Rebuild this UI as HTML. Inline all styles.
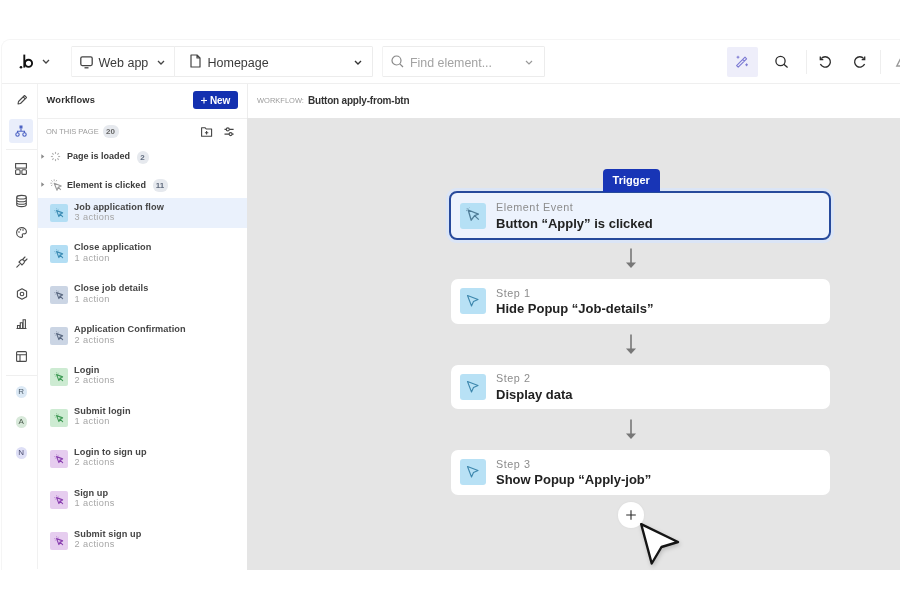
<!DOCTYPE html>
<html><head><meta charset="utf-8">
<style>
*{box-sizing:border-box;margin:0;padding:0}
html,body{width:900px;height:600px;overflow:hidden;background:#fff;}body{filter:blur(0.3px);font-family:"Liberation Sans",sans-serif;color:#2b2b2b}
.a{position:absolute}
.t{position:absolute;line-height:1;white-space:nowrap}
svg{position:absolute;overflow:visible}
</style></head><body>
<!-- app window -->
<div class="a" style="left:1px;top:39px;width:910px;height:531px;background:#fff;border:1px solid #f5f5f5;border-right:none;border-bottom:none;border-radius:9px 0 0 0"></div>
<!-- top bar border -->
<div class="a" style="left:2px;top:83px;width:898px;height:1px;background:#efefef"></div>

<!-- logo -->
<svg style="left:18px;top:53px" width="18" height="17" viewBox="0 0 18 17"><circle cx="3" cy="14.3" r="1.3" fill="#111"/><path d="M6.3 1.6 V14.6" stroke="#111" stroke-width="1.9"/><circle cx="10.5" cy="10.3" r="3.6" fill="none" stroke="#111" stroke-width="1.9"/></svg>
<svg style="left:42px;top:59px" width="8" height="5" viewBox="0 0 8 5"><path d="M1 1 L4 4 L7 1" fill="none" stroke="#444" stroke-width="1.3"/></svg>

<!-- Web app / Homepage group -->
<div class="a" style="left:71px;top:46px;width:302px;height:31px;border:1px solid #ececec;border-left-color:#f2f2f2;border-radius:1.5px"></div>
<div class="a" style="left:174px;top:46px;width:1px;height:31px;background:#eeeeee"></div>
<svg style="left:80px;top:55.5px" width="13" height="13" viewBox="0 0 13 13"><rect x="0.8" y="0.8" width="11.4" height="8.8" rx="1.5" fill="none" stroke="#444" stroke-width="1.3"/><path d="M4.5 11.8 H8.5" stroke="#444" stroke-width="1.3"/></svg>
<div class="t" style="left:98.5px;top:56.5px;font-size:12.5px;color:#3a3a3a">Web app</div>
<svg style="left:157px;top:60px" width="8" height="5" viewBox="0 0 8 5"><path d="M1 1 L4 4 L7 1" fill="none" stroke="#444" stroke-width="1.3"/></svg>
<svg style="left:190px;top:54px" width="11" height="14" viewBox="0 0 11 14"><path d="M1 1 H7 L10 4 V13 H1 Z M7 1 V4 H10" fill="none" stroke="#444" stroke-width="1.2" stroke-linejoin="round"/></svg>
<div class="t" style="left:207.5px;top:56.5px;font-size:12.5px;color:#3a3a3a">Homepage</div>
<svg style="left:354px;top:60px" width="8" height="5" viewBox="0 0 8 5"><path d="M1 1 L4 4 L7 1" fill="none" stroke="#333" stroke-width="1.4"/></svg>

<!-- Find element -->
<div class="a" style="left:382px;top:46px;width:163px;height:31px;border:1px solid #ececec;border-left-color:#f2f2f2;border-radius:1.5px"></div>
<svg style="left:391px;top:55px" width="13" height="13" viewBox="0 0 13 13"><circle cx="5.5" cy="5.5" r="4.5" fill="none" stroke="#888" stroke-width="1.2"/><path d="M8.8 8.8 L12 12" stroke="#888" stroke-width="1.2"/></svg>
<div class="t" style="left:410px;top:57px;font-size:12.4px;color:#a3a3a3">Find element...</div>
<svg style="left:525px;top:60px" width="8" height="5" viewBox="0 0 8 5"><path d="M1 1 L4 4 L7 1" fill="none" stroke="#999" stroke-width="1.2"/></svg>

<!-- right toolbar -->
<div class="a" style="left:727px;top:47px;width:31px;height:30px;background:#eeeefa;border-radius:2px"></div>
<svg style="left:735px;top:55px" width="14" height="14" viewBox="0 0 14 14"><path d="M1.6 10.6 L10 2.2 L11.6 3.8 L3.2 12.2 Z M7.8 4.4 L9.4 6" fill="none" stroke="#7b79d3" stroke-width="1.1" stroke-linejoin="round"/><path d="M3 0.8 V3.6 M1.6 2.2 H4.4 M11.6 8.4 V11.2 M10.2 9.8 H13" stroke="#7b79d3" stroke-width="1"/></svg>
<svg style="left:775px;top:55px" width="14" height="14" viewBox="0 0 14 14"><circle cx="5.5" cy="6" r="4.6" fill="none" stroke="#2b2b2b" stroke-width="1.3"/><path d="M8.8 9.3 L12.6 12.6" stroke="#2b2b2b" stroke-width="1.3"/></svg>
<div class="a" style="left:806px;top:50px;width:1px;height:24px;background:#eeeeee"></div>
<svg style="left:818px;top:55px" width="14" height="14" viewBox="0 0 14 14"><path d="M3.2 3.6 A5.2 5.2 0 1 1 2.4 9" fill="none" stroke="#2b2b2b" stroke-width="1.3"/><path d="M2.3 1.6 V4.6 H5.3" fill="none" stroke="#2b2b2b" stroke-width="1.3"/></svg>
<svg style="left:853px;top:55px" width="14" height="14" viewBox="0 0 14 14"><path d="M10.8 3.6 A5.2 5.2 0 1 0 11.6 9" fill="none" stroke="#2b2b2b" stroke-width="1.3"/><path d="M11.7 1.6 V4.6 H8.7" fill="none" stroke="#2b2b2b" stroke-width="1.3"/></svg>
<div class="a" style="left:880px;top:50px;width:1px;height:24px;background:#eeeeee"></div>
<svg style="left:896px;top:54px" width="14" height="14" viewBox="0 0 14 14"><path d="M6.5 1 L12.5 12 H0.8 Z" fill="none" stroke="#999" stroke-width="1.4"/></svg>

<!-- left rail -->
<div class="a" style="left:37px;top:84px;width:1px;height:485px;background:#f1f1f1"></div>
<div class="a" style="left:9px;top:119px;width:24px;height:24px;background:#e9eefb;border-radius:3px"></div>
<div class="a" style="left:6px;top:149px;width:31px;height:1px;background:#efefef"></div>
<div class="a" style="left:6px;top:375px;width:31px;height:1px;background:#efefef"></div>
<svg style="left:15.5px;top:94px" width="12" height="12" viewBox="0 0 12 12"><path d="M2 10 L2.5 7.5 L8.5 1.5 L10.5 3.5 L4.5 9.5 Z M7.2 2.8 L9.2 4.8" fill="none" stroke="#4a4a4a" stroke-width="1.1" stroke-linejoin="round"/></svg>
<svg style="left:15px;top:125px" width="12" height="12" viewBox="0 0 12 12"><rect x="4.5" y="0.5" width="3" height="3" fill="#4d63c4"/><path d="M6 3.5 V6 M2.5 8 V6.2 H9.5 V8" fill="none" stroke="#4d63c4" stroke-width="1.1"/><circle cx="2.5" cy="9.5" r="1.7" fill="none" stroke="#4d63c4" stroke-width="1.1"/><circle cx="9.5" cy="9.5" r="1.7" fill="none" stroke="#4d63c4" stroke-width="1.1"/></svg>
<svg style="left:15px;top:163px" width="12" height="12" viewBox="0 0 12 12"><rect x="0.6" y="0.6" width="10.8" height="4.5" fill="none" stroke="#4a4a4a" stroke-width="1.1"/><rect x="0.6" y="6.8" width="4.5" height="4.6" rx="1" fill="none" stroke="#4a4a4a" stroke-width="1.1"/><rect x="6.9" y="6.8" width="4.5" height="4.6" rx="1" fill="none" stroke="#4a4a4a" stroke-width="1.1"/></svg>
<svg style="left:15.5px;top:195px" width="11" height="12" viewBox="0 0 11 12"><ellipse cx="5.5" cy="2.2" rx="4.8" ry="1.8" fill="none" stroke="#4a4a4a" stroke-width="1.1"/><path d="M0.7 2.2 V9.8 A4.8 1.8 0 0 0 10.3 9.8 V2.2 M0.7 5 A4.8 1.8 0 0 0 10.3 5 M0.7 7.5 A4.8 1.8 0 0 0 10.3 7.5" fill="none" stroke="#4a4a4a" stroke-width="1.1"/></svg>
<svg style="left:15.5px;top:226.5px" width="11" height="11" viewBox="0 0 11 11"><path d="M5.5 0.6 C8.5 0.6 10.4 2.6 10.4 4.8 C10.4 6.5 9 7 7.8 6.8 C6.6 6.6 6 7.5 6.4 8.5 C6.9 9.8 6.2 10.4 5.2 10.4 C2.6 10.4 0.6 8.2 0.6 5.5 C0.6 2.8 2.8 0.6 5.5 0.6 Z" fill="none" stroke="#4a4a4a" stroke-width="1.1"/><circle cx="3" cy="5" r="0.8" fill="#4a4a4a"/><circle cx="4.5" cy="2.8" r="0.8" fill="#4a4a4a"/><circle cx="7" cy="3" r="0.8" fill="#4a4a4a"/></svg>
<svg style="left:15.5px;top:256px" width="12" height="12" viewBox="0 0 12 12"><path d="M0.8 11.2 L3.3 8.7 M3 6 L6 9 L7.8 7.2 C8.6 6.4 8.6 5.2 7.8 4.4 L7.6 4.2 C6.8 3.4 5.6 3.4 4.8 4.2 Z M7 3 L9 1 M9 5 L11 3" fill="none" stroke="#4a4a4a" stroke-width="1.1" stroke-linecap="round"/></svg>
<svg style="left:15.5px;top:287.5px" width="12" height="12" viewBox="0 0 12 12"><path d="M6 0.7 L10.6 3.35 V8.65 L6 11.3 L1.4 8.65 V3.35 Z" fill="none" stroke="#4a4a4a" stroke-width="1.1" stroke-linejoin="round"/><circle cx="6" cy="6" r="1.8" fill="none" stroke="#4a4a4a" stroke-width="1.1"/></svg>
<svg style="left:16px;top:319px" width="11" height="10" viewBox="0 0 11 10"><path d="M0.5 9.5 H10.5 M1.5 9.5 V6.5 H3.8 V9.5 M4.3 9.5 V3.8 H6.6 V9.5 M7.1 9.5 V0.8 H9.4 V9.5" fill="none" stroke="#4a4a4a" stroke-width="1.1"/></svg>
<svg style="left:15.5px;top:350.5px" width="11" height="11" viewBox="0 0 11 11"><rect x="0.6" y="0.6" width="9.8" height="9.8" rx="1" fill="none" stroke="#4a4a4a" stroke-width="1.1"/><path d="M0.6 3.8 H10.4 M4 3.8 V10.4" fill="none" stroke="#4a4a4a" stroke-width="1.1"/></svg>
<div class="a" style="left:15.5px;top:386.2px;width:11.5px;height:11.5px;border-radius:50%;background:#dce9f5"></div>
<div class="t" style="left:15.5px;width:11.5px;text-align:center;top:388.1px;font-size:8px;color:#4a5a6a">R</div>
<div class="a" style="left:15.5px;top:416.2px;width:11.5px;height:11.5px;border-radius:50%;background:#d8e9da"></div>
<div class="t" style="left:15.5px;width:11.5px;text-align:center;top:418.1px;font-size:8px;color:#4a5a4c">A</div>
<div class="a" style="left:15.5px;top:447.2px;width:11.5px;height:11.5px;border-radius:50%;background:#dedff6"></div>
<div class="t" style="left:15.5px;width:11.5px;text-align:center;top:449.1px;font-size:8px;color:#4a4c70">N</div>

<!-- sidebar -->
<div class="a" style="left:247px;top:84px;width:1px;height:485px;background:#ededed"></div>
<div class="a" style="left:38px;top:118px;width:209px;height:1px;background:#efefef"></div>
<div class="t" style="left:46.5px;top:96.3px;font-size:9.3px;font-weight:bold;color:#2e2e2e;letter-spacing:0.2px">Workflows</div>
<div class="a" style="left:193px;top:91px;width:45px;height:18px;background:#1330b0;border-radius:3px"></div>
<svg style="left:200.5px;top:96.5px" width="6" height="7" viewBox="0 0 6 7"><path d="M3 0.5 V6.5 M0 3.5 H6" stroke="#fff" stroke-width="1.1"/></svg>
<div class="t" style="left:210px;top:95.6px;font-size:10px;font-weight:bold;color:#fff;letter-spacing:-0.1px">New</div>
<div class="t" style="left:46px;top:128px;font-size:7.5px;color:#9c9c9c">ON THIS PAGE</div>
<div class="a" style="left:103px;top:125px;width:16px;height:13px;background:#e6e9ee;border-radius:6px"></div>
<div class="t" style="left:106px;top:128px;font-size:8px;font-weight:bold;color:#666">20</div>

<svg style="left:201px;top:126.5px" width="12" height="10" viewBox="0 0 12 10"><path d="M0.6 0.8 H4.2 L5.2 2 H10.6 V9.2 H0.6 Z" fill="none" stroke="#444" stroke-width="1.1" stroke-linejoin="round"/><path d="M5.6 4 V7.4 M3.9 5.7 H7.3" stroke="#444" stroke-width="1.1"/></svg>
<svg style="left:223.5px;top:126.5px" width="11" height="10" viewBox="0 0 11 10"><path d="M0.5 2.4 H9.6 M0.5 7.1 H9.6" stroke="#444" stroke-width="1.1"/><circle cx="3.8" cy="2.4" r="1.5" fill="#fff" stroke="#444" stroke-width="1.1"/><circle cx="6.6" cy="7.1" r="1.5" fill="#fff" stroke="#444" stroke-width="1.1"/></svg>
<svg style="left:41px;top:154.1px" width="4" height="5" viewBox="0 0 4 5"><path d="M0.3 0.3 L3.3 2.5 L0.3 4.7 Z" fill="#8a8a8a"/></svg>
<svg style="left:41px;top:182.3px" width="4" height="5" viewBox="0 0 4 5"><path d="M0.3 0.3 L3.3 2.5 L0.3 4.7 Z" fill="#8a8a8a"/></svg>
<svg style="left:50px;top:151px" width="11" height="11" viewBox="0 0 11 11"><path d="M8.10 5.50 L10.10 5.50" stroke="#b0b0b0" stroke-width="1.1"/><path d="M7.34 7.34 L8.75 8.75" stroke="#b0b0b0" stroke-width="1.1"/><path d="M5.50 8.10 L5.50 10.10" stroke="#b0b0b0" stroke-width="1.1"/><path d="M3.66 7.34 L2.25 8.75" stroke="#b0b0b0" stroke-width="1.1"/><path d="M2.90 5.50 L0.90 5.50" stroke="#b0b0b0" stroke-width="1.1"/><path d="M3.66 3.66 L2.25 2.25" stroke="#b0b0b0" stroke-width="1.1"/><path d="M5.50 2.90 L5.50 0.90" stroke="#b0b0b0" stroke-width="1.1"/><path d="M7.34 3.66 L8.75 2.25" stroke="#b0b0b0" stroke-width="1.1"/></svg>
<svg style="left:49.5px;top:179px" width="12" height="12" viewBox="0 0 12 12"><path d="M4.2 4.2 L11.2 7 L8.2 8.2 L7 11.2 Z M8.2 8.2 L10.8 10.8" fill="none" stroke="#9a9a9a" stroke-width="1.1" stroke-linejoin="round"/><path d="M4.2 0.3 V2.2 M0.3 4.2 H2.2 M1.2 1.2 L2.6 2.6 M6.8 1 L6 2.4 M1 6.8 L2.4 6" stroke="#b0b0b0" stroke-width="0.9"/></svg>
<div class="t" style="left:67px;top:152.2px;font-size:9px;font-weight:bold;color:#3a3a3a;letter-spacing:0px">Page is loaded</div>
<div class="a" style="left:136.5px;top:150.5px;width:12px;height:13px;background:#e6e9ee;border-radius:6px"></div>
<div class="t" style="left:136.5px;width:12px;text-align:center;top:153.5px;font-size:8px;font-weight:bold;color:#5f6a7c">2</div>
<div class="t" style="left:67px;top:180.9px;font-size:9px;font-weight:bold;color:#3a3a3a;letter-spacing:0.05px">Element is clicked</div>
<div class="a" style="left:152.5px;top:179px;width:15px;height:13px;background:#e6e9ee;border-radius:6px"></div>
<div class="t" style="left:152.5px;width:15px;text-align:center;top:182px;font-size:8px;font-weight:bold;color:#5f6a7c">11</div>
<div class="a" style="left:38px;top:198px;width:209px;height:30px;background:#eaf1fc"></div>
<div class="a" style="left:50px;top:204.0px;width:18px;height:18px;background:#b3def4;border-radius:2px"></div>
<svg style="left:54px;top:208.0px" width="10" height="10" viewBox="0 0 10 10"><path d="M2.6 2.6 L8.6 4.9 L6.1 6.1 L4.9 8.6 Z M6.1 6.1 L8.6 8.6" fill="none" stroke="#3d8db5" stroke-width="1.15" stroke-linejoin="round" stroke-linecap="round"/><path d="M2.6 0.4 V1.3 M0.4 2.6 H1.3 M4.6 0.9 L4.1 1.6 M0.9 4.6 L1.6 4.1" stroke="#3d8db5" stroke-width="0.7" opacity="0.8"/></svg>
<div class="t" style="left:74px;top:202.5px;font-size:9.2px;font-weight:bold;color:#454545;letter-spacing:0.08px">Job application flow</div>
<div class="t" style="left:74.5px;top:212.6px;font-size:9.2px;color:#a6a6a6;letter-spacing:0.38px">3 actions</div>
<div class="a" style="left:50px;top:244.9px;width:18px;height:18px;background:#b3def4;border-radius:2px"></div>
<svg style="left:54px;top:248.95px" width="10" height="10" viewBox="0 0 10 10"><path d="M2.6 2.6 L8.6 4.9 L6.1 6.1 L4.9 8.6 Z M6.1 6.1 L8.6 8.6" fill="none" stroke="#3d8db5" stroke-width="1.15" stroke-linejoin="round" stroke-linecap="round"/><path d="M2.6 0.4 V1.3 M0.4 2.6 H1.3 M4.6 0.9 L4.1 1.6 M0.9 4.6 L1.6 4.1" stroke="#3d8db5" stroke-width="0.7" opacity="0.8"/></svg>
<div class="t" style="left:74px;top:243.4px;font-size:9.2px;font-weight:bold;color:#454545;letter-spacing:0.08px">Close application</div>
<div class="t" style="left:74.5px;top:253.5px;font-size:9.2px;color:#a6a6a6;letter-spacing:0.38px">1 action</div>
<div class="a" style="left:50px;top:285.9px;width:18px;height:18px;background:#cbd5e4;border-radius:2px"></div>
<svg style="left:54px;top:289.9px" width="10" height="10" viewBox="0 0 10 10"><path d="M2.6 2.6 L8.6 4.9 L6.1 6.1 L4.9 8.6 Z M6.1 6.1 L8.6 8.6" fill="none" stroke="#5b6a82" stroke-width="1.15" stroke-linejoin="round" stroke-linecap="round"/><path d="M2.6 0.4 V1.3 M0.4 2.6 H1.3 M4.6 0.9 L4.1 1.6 M0.9 4.6 L1.6 4.1" stroke="#5b6a82" stroke-width="0.7" opacity="0.8"/></svg>
<div class="t" style="left:74px;top:284.4px;font-size:9.2px;font-weight:bold;color:#454545;letter-spacing:0.08px">Close job details</div>
<div class="t" style="left:74.5px;top:294.5px;font-size:9.2px;color:#a6a6a6;letter-spacing:0.38px">1 action</div>
<div class="a" style="left:50px;top:326.9px;width:18px;height:18px;background:#cbd5e4;border-radius:2px"></div>
<svg style="left:54px;top:330.85px" width="10" height="10" viewBox="0 0 10 10"><path d="M2.6 2.6 L8.6 4.9 L6.1 6.1 L4.9 8.6 Z M6.1 6.1 L8.6 8.6" fill="none" stroke="#5b6a82" stroke-width="1.15" stroke-linejoin="round" stroke-linecap="round"/><path d="M2.6 0.4 V1.3 M0.4 2.6 H1.3 M4.6 0.9 L4.1 1.6 M0.9 4.6 L1.6 4.1" stroke="#5b6a82" stroke-width="0.7" opacity="0.8"/></svg>
<div class="t" style="left:74px;top:325.4px;font-size:9.2px;font-weight:bold;color:#454545;letter-spacing:0.08px">Application Confirmation</div>
<div class="t" style="left:74.5px;top:335.5px;font-size:9.2px;color:#a6a6a6;letter-spacing:0.38px">2 actions</div>
<div class="a" style="left:50px;top:367.8px;width:18px;height:18px;background:#cdebd2;border-radius:2px"></div>
<svg style="left:54px;top:371.8px" width="10" height="10" viewBox="0 0 10 10"><path d="M2.6 2.6 L8.6 4.9 L6.1 6.1 L4.9 8.6 Z M6.1 6.1 L8.6 8.6" fill="none" stroke="#3f9a55" stroke-width="1.15" stroke-linejoin="round" stroke-linecap="round"/><path d="M2.6 0.4 V1.3 M0.4 2.6 H1.3 M4.6 0.9 L4.1 1.6 M0.9 4.6 L1.6 4.1" stroke="#3f9a55" stroke-width="0.7" opacity="0.8"/></svg>
<div class="t" style="left:74px;top:366.3px;font-size:9.2px;font-weight:bold;color:#454545;letter-spacing:0.08px">Login</div>
<div class="t" style="left:74.5px;top:376.4px;font-size:9.2px;color:#a6a6a6;letter-spacing:0.38px">2 actions</div>
<div class="a" style="left:50px;top:408.8px;width:18px;height:18px;background:#cdebd2;border-radius:2px"></div>
<svg style="left:54px;top:412.75px" width="10" height="10" viewBox="0 0 10 10"><path d="M2.6 2.6 L8.6 4.9 L6.1 6.1 L4.9 8.6 Z M6.1 6.1 L8.6 8.6" fill="none" stroke="#3f9a55" stroke-width="1.15" stroke-linejoin="round" stroke-linecap="round"/><path d="M2.6 0.4 V1.3 M0.4 2.6 H1.3 M4.6 0.9 L4.1 1.6 M0.9 4.6 L1.6 4.1" stroke="#3f9a55" stroke-width="0.7" opacity="0.8"/></svg>
<div class="t" style="left:74px;top:407.2px;font-size:9.2px;font-weight:bold;color:#454545;letter-spacing:0.08px">Submit login</div>
<div class="t" style="left:74.5px;top:417.4px;font-size:9.2px;color:#a6a6a6;letter-spacing:0.38px">1 action</div>
<div class="a" style="left:50px;top:449.7px;width:18px;height:18px;background:#e6cdef;border-radius:2px"></div>
<svg style="left:54px;top:453.70000000000005px" width="10" height="10" viewBox="0 0 10 10"><path d="M2.6 2.6 L8.6 4.9 L6.1 6.1 L4.9 8.6 Z M6.1 6.1 L8.6 8.6" fill="none" stroke="#8a3fb0" stroke-width="1.15" stroke-linejoin="round" stroke-linecap="round"/><path d="M2.6 0.4 V1.3 M0.4 2.6 H1.3 M4.6 0.9 L4.1 1.6 M0.9 4.6 L1.6 4.1" stroke="#8a3fb0" stroke-width="0.7" opacity="0.8"/></svg>
<div class="t" style="left:74px;top:448.2px;font-size:9.2px;font-weight:bold;color:#454545;letter-spacing:0.08px">Login to sign up</div>
<div class="t" style="left:74.5px;top:458.3px;font-size:9.2px;color:#a6a6a6;letter-spacing:0.38px">2 actions</div>
<div class="a" style="left:50px;top:490.7px;width:18px;height:18px;background:#e6cdef;border-radius:2px"></div>
<svg style="left:54px;top:494.65000000000003px" width="10" height="10" viewBox="0 0 10 10"><path d="M2.6 2.6 L8.6 4.9 L6.1 6.1 L4.9 8.6 Z M6.1 6.1 L8.6 8.6" fill="none" stroke="#8a3fb0" stroke-width="1.15" stroke-linejoin="round" stroke-linecap="round"/><path d="M2.6 0.4 V1.3 M0.4 2.6 H1.3 M4.6 0.9 L4.1 1.6 M0.9 4.6 L1.6 4.1" stroke="#8a3fb0" stroke-width="0.7" opacity="0.8"/></svg>
<div class="t" style="left:74px;top:489.2px;font-size:9.2px;font-weight:bold;color:#454545;letter-spacing:0.08px">Sign up</div>
<div class="t" style="left:74.5px;top:499.3px;font-size:9.2px;color:#a6a6a6;letter-spacing:0.38px">1 actions</div>
<div class="a" style="left:50px;top:531.6px;width:18px;height:18px;background:#e6cdef;border-radius:2px"></div>
<svg style="left:54px;top:535.6px" width="10" height="10" viewBox="0 0 10 10"><path d="M2.6 2.6 L8.6 4.9 L6.1 6.1 L4.9 8.6 Z M6.1 6.1 L8.6 8.6" fill="none" stroke="#8a3fb0" stroke-width="1.15" stroke-linejoin="round" stroke-linecap="round"/><path d="M2.6 0.4 V1.3 M0.4 2.6 H1.3 M4.6 0.9 L4.1 1.6 M0.9 4.6 L1.6 4.1" stroke="#8a3fb0" stroke-width="0.7" opacity="0.8"/></svg>
<div class="t" style="left:74px;top:530.1px;font-size:9.2px;font-weight:bold;color:#454545;letter-spacing:0.08px">Submit sign up</div>
<div class="t" style="left:74.5px;top:540.2px;font-size:9.2px;color:#a6a6a6;letter-spacing:0.38px">2 actions</div>

<!-- canvas header -->
<div class="t" style="left:257px;top:97px;font-size:7.5px;color:#9c9c9c">WORKFLOW:</div>
<div class="t" style="left:308px;top:96px;font-size:10px;font-weight:bold;color:#333;letter-spacing:-0.2px">Button apply-from-btn</div>

<!-- canvas -->
<div class="a" style="left:247px;top:118px;width:653px;height:451.5px;background:#e5e5e5"></div>
<div class="a" style="left:446px;top:188px;width:388px;height:55px;border-radius:11px;background:#dbe5f6"></div>
<div class="a" style="left:449px;top:191px;width:382px;height:49px;border:2px solid #274a9b;border-radius:8px;background:#edf3fd"></div>
<div class="a" style="left:602.5px;top:168.5px;width:57.5px;height:23.5px;background:#1835b6;border-radius:4px 4px 0 0"></div>
<div class="t" style="left:602.5px;width:57.5px;text-align:center;top:174.5px;font-size:11px;font-weight:bold;color:#fff">Trigger</div>
<div class="a" style="left:460px;top:202.5px;width:26px;height:26px;background:#b5e0f5;border-radius:3px"></div>
<svg style="left:466px;top:208px" width="14" height="14" viewBox="0 0 14 14"><path d="M2.2 2 L12.4 6.2 L8.6 7.6 L5.2 12.2 Z M8.6 7.6 L12.8 11.6" fill="none" stroke="#4f7d98" stroke-width="1.3" stroke-linejoin="round"/><path d="M1.2 0 V1.6 M0 2.6 H1.2 M2.6 0.4 L3.4 -0.4" stroke="#7aa0b8" stroke-width="0.9"/></svg>
<div class="t" style="left:496px;top:202px;font-size:10.8px;color:#8c8c8c;letter-spacing:0.55px">Element Event</div>
<div class="t" style="left:496px;top:216.5px;font-size:13px;font-weight:bold;color:#222">Button “Apply” is clicked</div>
<div class="a" style="left:451px;top:279px;width:378.5px;height:44.5px;border-radius:7px;background:#fff"></div>
<div class="a" style="left:460px;top:288px;width:26px;height:26px;background:#b8e1f5;border-radius:3px"></div>
<svg style="left:466px;top:294px" width="14" height="14" viewBox="0 0 14 14"><path d="M1.5 1.5 L12 5.5 L7.5 7.5 L5.5 12 Z" fill="none" stroke="#3d87ad" stroke-width="1.1" stroke-linejoin="round"/></svg>
<div class="t" style="left:496px;top:287.5px;font-size:10.8px;color:#8c8c8c;letter-spacing:0.55px">Step 1</div>
<div class="t" style="left:496px;top:302px;font-size:13px;font-weight:bold;color:#222">Hide Popup “Job-details”</div>
<div class="a" style="left:451px;top:364.5px;width:378.5px;height:44.5px;border-radius:7px;background:#fff"></div>
<div class="a" style="left:460px;top:373.5px;width:26px;height:26px;background:#b8e1f5;border-radius:3px"></div>
<svg style="left:466px;top:379.5px" width="14" height="14" viewBox="0 0 14 14"><path d="M1.5 1.5 L12 5.5 L7.5 7.5 L5.5 12 Z" fill="none" stroke="#3d87ad" stroke-width="1.1" stroke-linejoin="round"/></svg>
<div class="t" style="left:496px;top:373.0px;font-size:10.8px;color:#8c8c8c;letter-spacing:0.55px">Step 2</div>
<div class="t" style="left:496px;top:387.5px;font-size:13px;font-weight:bold;color:#222">Display data</div>
<div class="a" style="left:451px;top:450px;width:378.5px;height:44.5px;border-radius:7px;background:#fff"></div>
<div class="a" style="left:460px;top:459px;width:26px;height:26px;background:#b8e1f5;border-radius:3px"></div>
<svg style="left:466px;top:465px" width="14" height="14" viewBox="0 0 14 14"><path d="M1.5 1.5 L12 5.5 L7.5 7.5 L5.5 12 Z" fill="none" stroke="#3d87ad" stroke-width="1.1" stroke-linejoin="round"/></svg>
<div class="t" style="left:496px;top:458.5px;font-size:10.8px;color:#8c8c8c;letter-spacing:0.55px">Step 3</div>
<div class="t" style="left:496px;top:473px;font-size:13px;font-weight:bold;color:#222">Show Popup “Apply-job”</div>
<svg style="left:625px;top:248px" width="12" height="21" viewBox="0 0 12 21"><path d="M6 0.5 V16" stroke="#777" stroke-width="1.6"/><path d="M1 14.5 L6 20 L11 14.5 Z" fill="#777"/></svg>
<svg style="left:625px;top:333.5px" width="12" height="21" viewBox="0 0 12 21"><path d="M6 0.5 V16" stroke="#777" stroke-width="1.6"/><path d="M1 14.5 L6 20 L11 14.5 Z" fill="#777"/></svg>
<svg style="left:625px;top:419px" width="12" height="21" viewBox="0 0 12 21"><path d="M6 0.5 V16" stroke="#777" stroke-width="1.6"/><path d="M1 14.5 L6 20 L11 14.5 Z" fill="#777"/></svg>
<div class="a" style="left:618px;top:502px;width:25.5px;height:25.5px;border-radius:50%;background:#fff;box-shadow:0 0 3px rgba(0,0,0,0.05)"></div>
<svg style="left:625px;top:509px" width="12" height="12" viewBox="0 0 12 12"><path d="M6 1.2 V10.8 M1.2 6 H10.8" stroke="#2a2a2a" stroke-width="1.1"/></svg>
<svg style="left:630px;top:515px;filter:drop-shadow(1px 2px 2px rgba(0,0,0,0.18))" width="60" height="60" viewBox="0 0 60 60"><path d="M11.2 9.2 L48 27 L31.5 32 L21.7 48.5 Z" fill="#fff" stroke="#151515" stroke-width="2.4" stroke-linejoin="round"/></svg>

</body></html>
